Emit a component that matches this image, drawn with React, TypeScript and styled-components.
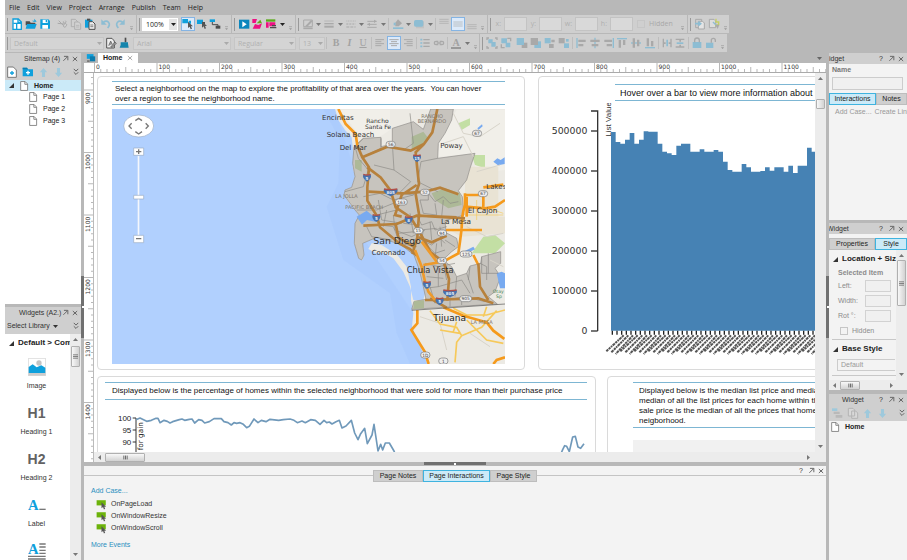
import React from "react";
import styled, { createGlobalStyle, css } from "styled-components";

const BLUE = "#0fa0dc";
const SOFT = "#8dbdd3";
const DARK = "#4c4c4c";
const DIM = "#a9a9a9";

const Global = createGlobalStyle`
  * { box-sizing: border-box; }
  html, body { margin: 0; height: 100%; }
  body {
    background: #fff;
    font: 7px/10px "Liberation Sans", Arial, sans-serif;
    color: #333;
    overflow: hidden;
  }
  button, input, select { font: inherit; color: inherit; margin: 0; padding: 0; border: 0; background: none; }
  svg { display: block; flex: none; }
  ul { list-style: none; margin: 0; padding: 0; }
  p, h2, h3 { margin: 0; font-size: inherit; }
`;

/* ---------- shell ---------- */
const Shell = styled.div`
  display: flex;
  flex-direction: column;
  height: 100vh;
  margin-left: 5px;
  background: #b8b8b8;
  overflow: hidden;
`;
const MenuBar = styled.nav`
  display: flex;
  gap: 7px;
  height: 15px;
  padding: 0 4px;
  align-items: center;
  font-family: "Open Sans", "Noto Sans", sans-serif;
  button { white-space: nowrap; color: #222; }
`;
const ToolRow = styled.div`
  display: flex;
  gap: 1px;
  height: 18px;
  margin-bottom: 1px;
  flex: none;
`;
const ToolGroup = styled.div`
  display: flex;
  align-items: center;
  background: #cfcfcf;
  flex: none;
`;
const Handle = styled.i`
  width: 5px;
  height: 13px;
  flex: none;
  &::before { content: ""; display: block; width: 1px; height: 13px; margin-left: 2px; background: #999; }
`;
const Sep = styled.i<{ $w?: number }>`
  width: ${(p) => p.$w ?? 3}px;
  height: 12px;
  flex: none;
  &::before { content: ""; display: block; width: 1px; height: 12px; margin-left: 1px; background: #bdbdbd; }
`;
const Gap = styled.i<{ $w: number }>`
  width: ${(p) => p.$w}px;
  flex: none;
`;
const Tool = styled.button<{ $w?: number; $on?: boolean }>`
  width: ${(p) => p.$w ?? 14}px;
  height: 14px;
  display: grid;
  place-items: center;
  flex: none;
  ${(p) => p.$on && css`border: 1px solid #85b4e3; background: #dceafa;`}
`;
const Combo = styled.span<{ $w: number; $live?: boolean }>`
  display: flex;
  align-items: center;
  width: ${(p) => p.$w}px;
  height: 13px;
  flex: none;
  background: ${(p) => (p.$live ? "#fff" : "#d4d4d4")};
  border: 1px solid ${(p) => (p.$live ? "#fff" : "#c6c6c6")};
  color: ${(p) => (p.$live ? "#222" : "#b0b0b0")};
  font-family: "Open Sans", "Noto Sans", sans-serif;
  select { appearance: none; flex: 1; min-width: 0; padding-left: 3px; height: 11px; line-height: 11px; opacity: 1; }
  i { width: 8px; height: 11px; display: grid; place-items: center; background: ${(p) => (p.$live ? "#e4e4e4" : "none")}; }
`;
const Field = styled.label<{ $w: number }>`
  display: flex;
  align-items: center;
  justify-content: flex-end;
  gap: 3px;
  width: ${(p) => p.$w}px;
  flex: none;
  color: #b0b0b0;
  font-family: "Open Sans", "Noto Sans", sans-serif;
  input { width: 23px; height: 14px; background: #d9d9d9; border: 1px solid #c3c3c3; flex: none; }
`;
const Check = styled.label`
  display: flex;
  align-items: center;
  gap: 4px;
  color: #a8a8a8;
  input { appearance: none; width: 8px; height: 8px; border: 1px solid #c6c6c6; background: transparent; flex: none; }
`;
const ToolCheck = styled(Check)`
  width: 41px;
  margin-left: 4px;
  font-family: "Open Sans", "Noto Sans", sans-serif;
`;

const Main = styled.div`
  flex: 1;
  min-height: 0;
  display: grid;
  grid-template-columns: 76px minmax(0, 1fr) 78px;
  column-gap: 3px;
`;
const Column = styled.div`
  display: flex;
  flex-direction: column;
  min-width: 0;
  min-height: 0;
  position: relative;
`;
const SplitGrip = styled.i<{ $side: "left" | "right" }>`
  position: absolute;
  top: 44%;
  ${(p) => (p.$side === "left" ? "right: -3px;" : "left: -3px;")}
  width: 3px;
  height: 62px;
  background: #707070;
  display: grid;
  place-items: center;
  &::before { content: ""; width: 2px; height: 2px; background: #fff; }
`;
const Panel = styled.section<{ $h?: number; $bg?: string }>`
  display: flex;
  flex-direction: column;
  min-height: 0;
  overflow: hidden;
  background: ${(p) => p.$bg ?? "#f3f3f3"};
  ${(p) => (p.$h ? css`flex: 0 0 ${p.$h}px;` : css`flex: 1;`)}
`;
const PanelTitle = styled.header<{ $pad?: number }>`
  display: flex;
  align-items: center;
  height: 11px;
  flex: none;
  background: #cfcfcf;
  padding: 0 1px 0 ${(p) => p.$pad ?? 0}px;
  white-space: nowrap;
  h2 { flex: 1; min-width: 0; font-weight: 400; color: #333; }
  button { width: 10px; height: 10px; display: grid; place-items: center; }
`;
const PanelTools = styled.div`
  display: flex;
  align-items: center;
  height: 16px;
  flex: none;
  background: #cfcfcf;
`;
const Push = styled.i`flex: 1;`;

/* ---------- sitemap ---------- */
const Row = styled.li<{ $on?: boolean; $indent: number; $bold?: boolean }>`
  height: ${(p) => (p.$on ? 11 : 12)}px;
  display: flex;
  align-items: center;
  gap: 5px;
  padding-left: ${(p) => p.$indent}px;
  background: ${(p) => (p.$on ? "#cbeaf8" : "transparent")};
  font-weight: ${(p) => (p.$bold ? 700 : 400)};
  color: #222;
`;

/* ---------- widgets ---------- */
const LibraryBar = styled.div`
  display: flex;
  align-items: center;
  height: 16px;
  flex: none;
  padding-left: 2px;
  background: #cfcfcf;
  button { display: flex; align-items: center; gap: 3px; }
  button:last-child { display: grid; }
`;
const Scroller = styled.div`
  flex: 1;
  min-height: 0;
  display: flex;
  overflow: hidden;
`;
const Clip = styled.div`
  flex: 1;
  min-width: 0;
  overflow: hidden;
`;
const Heading = styled.h3`
  display: flex;
  align-items: center;
  gap: 4px;
  height: 18px;
  padding-left: 4px;
  font-size: 8px;
  white-space: nowrap;
  color: #222;
`;
const WidgetItem = styled.li`
  height: 46px;
  padding-right: 2px;
  display: flex;
  flex-direction: column;
  align-items: center;
  white-space: nowrap;
`;
const Glyph = styled.div`
  height: 29px;
  display: grid;
  place-items: center;
  font: 700 14px/14px "Liberation Sans", Arial, sans-serif;
  color: #626262;
`;

/* ---------- scroll bars ---------- */
const BarV = styled.div`
  width: 11px;
  flex: none;
  display: flex;
  flex-direction: column;
  align-items: center;
  background: #ececec;
  padding: 3px 0;
`;
const BarH = styled.div`
  height: 10px;
  flex: none;
  display: flex;
  align-items: center;
  background: #ececec;
  padding: 0 3px;
`;
const Thumb = styled.i<{ $w: number; $h: number; $before: number }>`
  width: ${(p) => p.$w}px;
  height: ${(p) => p.$h}px;
  margin: ${(p) => (p.$w === 9 ? `${p.$before}px 0 0` : `0 0 0 ${p.$before}px`)};
  border: 1px solid #b0b0b0;
  border-radius: 1px;
  background: linear-gradient(${(p) => (p.$w === 9 ? "90deg" : "180deg")}, #f8f8f8, #d2d2d2);
  display: grid;
  place-items: center;
  flex: none;
`;

/* ---------- canvas ---------- */
const TabStrip = styled.div`
  display: flex;
  align-items: center;
  height: 10px;
  flex: none;
  padding-right: 4px;
`;
const DocTab = styled.button`
  display: flex;
  align-items: center;
  gap: 5px;
  height: 10px;
  padding: 0 5px;
  background: #fff;
  font-weight: 700;
  color: #222;
`;
const RulerRow = styled.div`
  display: flex;
  height: 10px;
  flex: none;
  background: #fff;
  padding-left: 10px;
  overflow: hidden;
  border-bottom: 1px solid #aaa;
`;
const Work = styled.div`
  flex: 1;
  min-height: 0;
  display: flex;
  overflow: hidden;
  background: #fff;
`;
const RulerSide = styled.div`
  width: 10px;
  flex: none;
  overflow: hidden;
  border-right: 1px solid #bbb;
`;
const Stage = styled.div`
  flex: 1;
  min-width: 0;
  display: flex;
  flex-direction: column;
  overflow: hidden;
`;
const Paper = styled.div`
  flex: 1;
  min-height: 0;
  overflow: hidden;
  padding: 3px;
  display: flex;
  flex-direction: column;
  gap: 6px;
`;
const CardRow = styled.div<{ $gap: number }>`
  display: flex;
  align-items: stretch;
  gap: ${(p) => p.$gap}px;
  flex: none;
`;
const Card = styled.article<{ $pad: string }>`
  flex: none;
  border: 1px solid #dadada;
  border-radius: 4px;
  padding: ${(p) => p.$pad};
`;
const Note = styled.div<{ $pad: string; $size?: number }>`
  border-top: 1px solid #7db6d3;
  border-bottom: 1px solid #7db6d3;
  padding: ${(p) => p.$pad};
  font-size: ${(p) => p.$size ?? 8}px;
  line-height: 10px;
  color: #111;
  white-space: pre;
`;
const MapFrame = styled.div`
  padding: 4px 0 1px;
`;
const ChartNote = styled.div`
  margin: 0 0 2px 76px;
`;
const ChartSpace = styled.div`
  padding-top: 13px;
`;
const Placeholder = styled.div`
  height: 60px;
  margin-top: 12px;
  background: #f1f1f1;
`;

/* ---------- bottom panel ---------- */
const Grip = styled.div`
  height: 4px;
  flex: none;
  display: flex;
  justify-content: center;
  i { width: 62px; height: 3px; background: #707070; display: grid; place-items: center; }
  i::before { content: ""; width: 2px; height: 2px; background: #fff; }
`;
const Bottom = styled.section`
  height: 94px;
  flex: none;
  background: #f3f3f3;
`;
const BottomHead = styled.div`
  display: grid;
  grid-template-columns: 1fr auto 1fr;
  height: 20px;
  background: linear-gradient(#c4c4c4, #c4c4c4) 0 9px / 100% 1px no-repeat;
  align-items: center;
`;
const Tabs = styled.div`
  display: flex;
  flex: none;
  grid-column: 2;
`;
const Tab = styled.button<{ $on?: boolean; $w: number }>`
  width: ${(p) => p.$w}px;
  height: 12px;
  flex: none;
  border: 1px solid ${(p) => (p.$on ? "#3fb3df" : "#bdbdbd")};
  background: ${(p) => (p.$on ? "#cbeaf8" : "#cfcfcf")};
  white-space: nowrap;
  color: #222;
`;
const HeadButtons = styled.div`
  display: flex;
  justify-content: flex-end;
  align-self: start;
  button { width: 10px; height: 9px; display: grid; place-items: center; }
`;
const Events = styled.div`
  padding: 0 7px;
  a { color: #2a8fc0; text-decoration: none; display: block; height: 10px; }
  ul { padding: 2px 0 6px 5px; }
  li { height: 12px; }
  li button { display: flex; align-items: center; gap: 4px; height: 12px; white-space: nowrap; }
`;

/* ---------- right column ---------- */
const NameBox = styled.label`
  display: flex;
  flex-direction: column;
  gap: 2px;
  padding: 1px 4px 3px 3px;
  font-weight: 700;
  color: #777;
  input { height: 13px; width: 100%; border: 1px solid #ccc; background: #f0f0f0; }
`;
const Links = styled.div`
  display: flex;
  gap: 3px;
  padding: 2px 0 0 6px;
  white-space: nowrap;
  a { color: #999; text-decoration: none; }
`;
const PropRow = styled.label`
  display: flex;
  align-items: center;
  height: 15px;
  padding-left: 9px;
  color: #8b8b8b;
  span { width: 27px; }
  input { width: 26px; height: 12px; border: 1px solid #d2d2d2; background: #f0f0f0; }
`;
const PropTitle = styled.p`
  padding-left: 9px;
  font-weight: 700;
  color: #8b8b8b;
`;
const PropCheck = styled(Check)`
  height: 15px;
  padding-left: 11px;
  color: #8b8b8b;
`;
const StyleSelect = styled.select`
  appearance: none;
  display: block;
  width: 58px;
  height: 12px;
  margin: 1px 0 4px 8px;
  padding-left: 3px;
  border: 1px solid #ccc;
  border-right: 0;
  color: #999;
`;
const Rule = styled.hr`
  border: 0;
  border-top: 1px solid #c8c8c8;
  margin: 1px 0 0 3px;
`;
const Divider = styled.i<{ $h: number }>`
  height: ${(p) => p.$h}px;
  flex: none;
`;
const ClippedTitle = styled.h2`
  text-indent: -2px;
`;

/* ---------- icons, drawn on a 36-unit grid ---------- */
const Icon = ({ s = 12, children }: { s?: number; children: React.ReactNode }) => (
  <svg width={s} height={s} viewBox="0 0 36 36" fill="none" aria-hidden="true">{children}</svg>
);
const Caret = ({ c = "#333", dir = "down" }: { c?: string; dir?: "down" | "up" | "left" | "right" }) => {
  const d = { down: "M0 1h5l-2.5 3z", up: "M0 4h5l-2.5-3z", left: "M4 0v5l-3-2.5z", right: "M1 0v5l3-2.5z" }[dir];
  return <svg width="5" height="5" viewBox="0 0 5 5" aria-hidden="true"><path d={d} fill={c} /></svg>;
};
const Tri = () => <svg width="5" height="5" viewBox="0 0 5 5" aria-hidden="true"><path d="M5 0v5H0z" fill="#333" /></svg>;
const PinIcon = () => <Icon s={7}><path d="M10 7h20v20M29 8 7 30" stroke="#666" strokeWidth="5" /></Icon>;
const CloseIcon = ({ c = "#666" }: { c?: string }) => <Icon s={6}><path d="M5 6l26 24M31 6L5 30" stroke={c} strokeWidth="6" /></Icon>;
const Chevrons = () => <Icon s={8}><path d="M8 4l10 10L28 4M8 19l10 10 10-10" stroke="#555" strokeWidth="4" /></Icon>;
const PageIcon = () => <Icon s={10}><path d="M6 2h16l9 9v23H6z" fill="#fff" stroke="#777" strokeWidth="3" /><path d="M21 2v10h10" stroke="#777" strokeWidth="3" /></Icon>;
const Cursor = ({ x = 18, y = 12, c = "#555" }: { x?: number; y?: number; c?: string }) => (
  <path transform={`translate(${x} ${y})`} d="M0 0v19l5-4 3 8 4-2-3-7h6z" fill={c} />
);
const Arrow = ({ up }: { up?: boolean }) => (
  <Icon s={11}><path d={up ? "M18 3l12 14h-7v16H13V17H6z" : "M18 33L6 19h7V3h10v16h7z"} fill="#9ec9dc" /></Icon>
);
const More = ({ w = 9 }: { w?: number }) => (
  <Tool $w={w} aria-label="More tools">
    <svg width="5" height="14" viewBox="0 0 15 42"><path d="M3 29h9" stroke="#999" strokeWidth="2" /><path d="M3 34h9l-4 5z" fill="#999" /></svg>
  </Tool>
);
const Lines = ({ ys, x1 = 4, x2 = 32, c = DIM, w = 3, dash }: { ys: number[]; x1?: number; x2?: number; c?: string; w?: number; dash?: string }) => (
  <path d={ys.map((y) => `M${x1} ${y}H${x2}`).join("")} stroke={c} strokeWidth={w} strokeDasharray={dash} />
);

const icons: Record<string, React.ReactNode> = {
  new: <><path d="M6 3h16l9 9v22H6z" fill="#fff" stroke={BLUE} strokeWidth="4" /><path d="M21 3v10h10M7 16h24M17 16v17" stroke={BLUE} strokeWidth="4" /></>,
  open: <><path d="M2 10h12l3 4h14v8H2z" fill={DARK} /><path d="M20 8h8V2l7 9h-9" fill={BLUE} /><path d="M6 18h29l-5 14H2z" fill={BLUE} /></>,
  save: <><path d="M4 4h24l5 5v23H4z" fill={BLUE} /><path d="M11 5h15v10H11zM10 21h17v11H10z" fill="#fff" /><path d="M20 6h4v7h-4z" fill={BLUE} /></>,
  cut: <path d="M8 8l14 14M5 16l20 2M24 20a4 4 0 1 0 6 4 4 4 0 1 0-6-4M22 10a4 4 0 1 0 6-2" stroke={DIM} strokeWidth="3" />,
  copy: <><path d="M4 4h12l6 6v16H4z" stroke={DIM} strokeWidth="2.500" /><path d="M14 12h12l6 6v16H14z" fill="#d2d2d2" stroke={DIM} strokeWidth="2.500" /><path d="M18 22h10M18 27h10" stroke={DIM} strokeWidth="2" /></>,
  paste: <><path d="M3 5h22v24H3z" fill={BLUE} /><path d="M9 2h10v6H9z" fill={DARK} /><path d="M15 11h11l7 7v16H15z" fill="#eee" stroke={DARK} strokeWidth="3" /><path d="M19 21h9M19 26h9" stroke={DARK} strokeWidth="2" /></>,
  undo: <><path d="M10 13c12-9 25 3 13 17" stroke={SOFT} strokeWidth="5" /><path d="M4 4v16h16z" fill={SOFT} /></>,
  redo: <><path d="M26 13C14 4 1 16 13 30" stroke={SOFT} strokeWidth="5" /><path d="M32 4v16H16z" fill={SOFT} /></>,
  selA: <><path d="M1 3h17v13H1zM20 8h7v9h-7z" fill={BLUE} /><Cursor y={11} x={18} /></>,
  selB: <><path d="M3 5h18v13H3z" fill={BLUE} /><path d="M21 12h6v7h-6z" fill={DARK} /><Cursor y={10} /></>,
  connect: <><path d="M2 4h16v8H2z" fill={BLUE} /><path d="M20 23h14v9H20z" fill={DARK} /><path d="M10 12v8h17v4" stroke={DARK} strokeWidth="3" /></>,
  play: <><path d="M3 5h31v27H3z" fill="#0b86bd" /><path d="M13 10l13 9-13 9z" fill="#fff" /></>,
  share: <><path d="M4 3h14l-4 12H4z" fill="#ee1182" /><path d="M5 32l7-14 10 3 11-5-6 16z" fill="#ee1182" /><path d="M17 16L28 5l5 11z" fill="#63a81e" /></>,
  html: <><path d="M3 4h28v7H3z" fill="#5bab1b" /><path d="M3 13h8v16H3zM13 13h18v12H13z" fill="#ee1182" /><path d="M21 21h12v4H21zM15 27h19v4H15z" fill={DARK} /></>,
  pen: <><path d="M5 6h26v20H5z" stroke={DIM} strokeWidth="3" /><path d="M10 24L27 6l5 4-16 16z" fill={DIM} /><Lines ys={[31]} w={5} /></>,
  weight: <><Lines ys={[9]} w={2} /><Lines ys={[17]} w={4} /><Lines ys={[26]} w={6} /></>,
  dash: <><Lines ys={[9]} w={2} dash="3 2" /><Lines ys={[18]} w={3} dash="6 3" /><Lines ys={[27]} w={3} dash="9 3" /></>,
  ends: <><Lines ys={[10, 19, 28]} w={3} /><path d="M24 5l8 5-8 5zM12 14l-8 5 8 5z" fill={DIM} /></>,
  fill: <><path d="M10 14L18 4l12 12-10 9H10z" fill={DIM} /><path d="M3 28h31v5H3z" fill={SOFT} /><path d="M5 14h6v8H5z" fill={SOFT} /></>,
  shape: <><path d="M9 10h24v21H9z" fill="#c2c2c2" /><rect x="3" y="6" width="28" height="20" rx="5" fill={SOFT} /></>,
  vtop: <Lines ys={[4, 10, 16]} w={2} />,
  vmid: <Lines ys={[12, 18, 24]} w={2} />,
  vbot: <Lines ys={[20, 26, 32]} w={2} />,
  al: <><Lines ys={[8, 20]} x2={30} /><Lines ys={[14, 26]} x2={22} /></>,
  ac: <><Lines ys={[8, 20]} /><Lines ys={[14, 26]} x1={9} x2={27} /></>,
  ar: <><Lines ys={[8, 20]} x1={6} /><Lines ys={[14, 26]} x1={14} /></>,
  list: <><Lines ys={[8, 18, 28]} x1={13} w={4} /><Lines ys={[8, 18, 28]} x1={4} x2={10} w={5} c={SOFT} /></>,
  link: <path d="M16 13H9a5 5 0 0 0 0 10h7M20 13h7a5 5 0 0 1 0 10h-7M11 18h14" stroke={DIM} strokeWidth="4" />,
  styleEdit: <><path d="M5 4h16l7 8v21H5z" fill="#eee" stroke="#555" strokeWidth="3" /><path d="M11 26l6-14 5 10M17 30l13-15 4 4-12 12z" stroke="#555" strokeWidth="2" fill="#999" /></>,
  brush: <><path d="M20 2h5v14h-5z" fill={DARK} /><path d="M8 16h22v4l2 12H5l3-8z" fill="#1585ac" /></>,
  swap1: <><path d="M5 4h18v25H5z" stroke={DIM} strokeWidth="3" /><path d="M13 10h13l5 5v18H13z" fill="#e4e4e4" stroke={DIM} strokeWidth="3" /><path d="M3 17h15m-5-6l7 6-7 6" stroke={SOFT} strokeWidth="5" /></>,
  swap2: <><path d="M4 4h14l5 5v20H4z" fill="#ddd" stroke={DIM} strokeWidth="3" /><path d="M15 12l14 14" stroke={SOFT} strokeWidth="4" /><path d="M24 2v10h8v8l-10 3" stroke="#c6cf63" strokeWidth="4" /><path d="M22 20h12l-5 13z" fill={DIM} /></>,
  group: <><path d="M7 7h13v12H7zM16 15h13v14H16z" fill={SOFT} /><path d="M3 9V3h6M27 3h6v6M33 27v6h-6M9 33H3v-6" stroke={DIM} strokeWidth="4" /></>,
  ungroup: <><path d="M4 4h17v15H4zM17 17h14v14H17z" fill={SOFT} /><path d="M22 4h10v9M4 22v10h10" stroke={DIM} strokeWidth="4" /></>,
  front: <><path d="M17 17h17v16H17z" fill={DIM} /><path d="M2 3h22v21H2z" fill={SOFT} /></>,
  back: <><path d="M13 13h20v20H13z" fill={SOFT} /><path d="M2 3h22v21H2z" fill={DIM} /></>,
  fwd: <><path d="M2 3h18v16H2z" fill={SOFT} /><path d="M22 8h10v8H22zM15 21h14v12H15z" fill={DIM} /></>,
  bwd: <><path d="M2 3h18v16H2z" fill={DIM} /><path d="M18 19h15v14H18z" fill={SOFT} /><path d="M24 6h8v8h-8z" fill={SOFT} /></>,
  left: <><path d="M4 3h4v30H4z" fill={SOFT} /><path d="M10 8h22v7H10zM10 21h15v7H10z" fill={DIM} /></>,
  center: <><path d="M16 2h4v32h-4z" fill={SOFT} /><path d="M4 8h28v7H4zM8 21h20v7H8z" fill={DIM} /></>,
  right: <><path d="M29 3h4v30h-4z" fill={SOFT} /><path d="M4 8h23v7H4zM11 21h16v7H11z" fill={DIM} /></>,
  top: <><path d="M3 3h30v4H3z" fill={SOFT} /><path d="M8 9h7v23H8zM21 9h7v15h-7z" fill={DIM} /></>,
  middle: <><path d="M3 16h30v4H3z" fill={SOFT} /><path d="M8 4h7v28H8zM21 8h7v20h-7z" fill={DIM} /></>,
  bottom: <><path d="M3 30h30v4H3z" fill={SOFT} /><path d="M8 4h7v24H8zM21 12h7v16h-7z" fill={DIM} /></>,
  disth: <><path d="M16 8h5v20h-5z" fill={SOFT} /><path d="M5 5h4v26H5zM28 5h4v26h-4zM5 16h9v5H5zM23 16h9v5h-9z" fill={DIM} /></>,
  distv: <><path d="M8 16h20v5H8z" fill={SOFT} /><path d="M5 5h26v4H5zM5 28h26v4H5zM16 5h5v9h-5zM16 23h5v9h-5z" fill={DIM} /></>,
  lock: <><path d="M5 15h26v18H5z" fill={SOFT} /><path d="M11 16v-6a7 7 0 0 1 14 0v6" stroke={DIM} strokeWidth="4" /></>,
  unlock: <><path d="M3 17h22v16H3z" fill={SOFT} /><path d="M19 17v-7a6 6 0 0 1 12 0v5" stroke={DIM} strokeWidth="4" /></>,
  addPage: <><path d="M5 3h17l9 9v22H5z" fill="#fff" stroke="#777" strokeWidth="3" /><path d="M18 15v12M12 21h12" stroke={BLUE} strokeWidth="4" /></>,
  addFolder: <><path d="M2 5h13l3 5h15v21H2z" fill={BLUE} /><path d="M2 5h13l3 5H2z" fill="#0b7cae" /><path d="M18 14v12M12 20h12" stroke="#fff" strokeWidth="4" /></>,
  layers: <><path d="M3 4h16v8H3z" fill="#9ec9dc" /><path d="M8 14h18v7H8zM14 24h20v8H14z" fill="#b9b9b9" /></>,
  pages: <><path d="M4 4h14l5 5v18H4zM14 12h12l6 6v16H14z" fill="#d8d8d8" stroke="#b4b4b4" strokeWidth="3" /></>,
  event: <><path d="M2 4h30v17H2z" fill="#6db30b" /><Cursor x={18} y={11} /></>,
  device: <><path d="M3 4h24v17H3z" fill={BLUE} /><path d="M14 12h19v18H14z" fill="#0b7cae" /><path d="M4 27h9v4H4z" fill={DARK} /></>,
};

const T = ({ n, w, on, label }: { n: string; w?: number; on?: boolean; label?: string }) => (
  <Tool $w={w} $on={on} aria-label={label ?? n}><Icon s={12}>{icons[n]}</Icon></Tool>
);
const Drop = ({ w = 8, c = "#777" }: { w?: number; c?: string }) => (
  <Tool $w={w} aria-label="Options"><Caret c={c} /></Tool>
);
const TextTool = styled(Tool)<{ $face?: string }>`
  font: 700 10px/12px "Liberation Serif", serif;
  color: #a2a2a2;
  ${(p) => p.$face === "i" && css`font-style: italic;`}
  ${(p) => p.$face === "u" && css`text-decoration: underline; font-weight: 400;`}
  ${(p) => p.$face === "a" && css`border-bottom: 2px solid #999; height: 12px; width: 10px; margin: 0 2px;`}
`;
const Pick = ({ w, v, live, label }: { w: number; v: string; live?: boolean; label: string }) => (
  <Combo $w={w} $live={live}>
    <select aria-label={label} defaultValue={v}><option>{v}</option></select>
    <i><Caret c={live ? "#222" : "#aaa"} /></i>
  </Combo>
);
const WindowButtons = ({ help }: { help?: boolean }) => (
  <>
    {help && <button aria-label="Help">?</button>}
    <button aria-label="Float panel"><PinIcon /></button>
    <button aria-label="Close panel"><CloseIcon /></button>
  </>
);

/* ---------- rulers ---------- */
const STEP = 62.5;
const TopRuler = () => (
  <svg width="100%" height="9" aria-hidden="true">
    {Array.from({ length: 300 }, (_, i) => (
      <path key={i} d={`M${(i * STEP) / 10 + 0.5} 9v${i % 10 === 0 ? -9 : i % 5 === 0 ? -5 : -3}`} stroke="#999" strokeWidth=".7" />
    ))}
    {Array.from({ length: 12 }, (_, i) => (
      <text key={i} x={i * STEP + 2} y="6" fontSize="6" fill="#333" fontFamily="DejaVu Sans">{i * 100}</text>
    ))}
  </svg>
);
const SideRuler = () => (
  <svg width="9" height="800" aria-hidden="true">
    {Array.from({ length: 120 }, (_, i) => (
      <path key={i} d={`M9 ${17 - STEP + (i * STEP) / 10}h${i % 10 === 0 ? -9 : i % 5 === 0 ? -5 : -2}`} stroke="#999" strokeWidth=".7" />
    ))}
    {Array.from({ length: 6 }, (_, i) => (
      <text key={i} transform={`translate(6 ${17 + i * STEP + (i ? 17 : 14)}) rotate(-90)`} fontSize="6" fill="#333" fontFamily="DejaVu Sans">{900 + i * 100}</text>
    ))}
  </svg>
);

/* ---------- map ---------- */
const regionLines = [
  "M160 115l-25 25 10 35 30 35-15 50-55 15M213 115v30l-55 25M247 130l5 80-60-15M252 210l50 35-40 40M300 40l10 90-30 20",
  "M383 175l-50 10-10 60 60 30M330 245l-20 40-80-10M160 290l50-10 40 20 60-15M140 330l60 0 50-20M205 300l10 60 60 10",
  "M330 300l25 0 0-20 20 25 25-15 20 20 25-5M330 300l10 40 40 5-5-35M400 300l-5 50 35 5M320 345l15 30 30-10 10 25 35-10",
  "M250 345l5 45 50 20 40-20M210 375l40 5 20 50 50 10M340 390l-5 30 30 15 25-20 15 15M360 365l5 55M390 380l5 60M335 420l40 40 30-10",
  "M300 340l10 60M280 370l50 5M170 380l15 30 60 10M230 330l-10 50M200 345l60-15M265 400l50-5M380 430l-5 45M405 420l30 20M330 390l50-5",
  "M345 490l40 10 0 60-40 5M385 500l50-10M385 560l70-20 25 40M440 530l-5 60M470 520l20 60M360 560l15 50M420 590l0 30M480 500l-5 40",
  "M515 470l0 50 50 0M535 460l0 60M345 600l60 0 60-10 60 15M510 490l20 10 0 40M400 490l10 50M350 530l50 5M455 600l0 15",
];
const Shield = ({ x, y, t }: { x: number; y: number; t: string }) => (
  <g transform={`translate(${x} ${y})`}>
    <path d={t.length > 2 ? "M-20-10Q0-6 20-10Q26 2 0 12Q-26 2-20-10z" : "M-11-10Q0-6 11-10Q16 2 0 12Q-16 2-11-10z"} fill="#4672ad" />
    <path d={t.length > 2 ? "M-20-10Q0-6 20-10" : "M-11-10Q0-6 11-10"} stroke="#b0504a" strokeWidth="4" fill="none" />
    <text y="6" fontSize="12" fontWeight="700" fill="#e8eef6" textAnchor="middle">{t}</text>
  </g>
);
const Route = ({ x, y, t }: { x: number; y: number; t: string }) => (
  <g transform={`translate(${x} ${y})`}>
    <rect x={t.length > 2 ? -18 : -14} y="-9" width={t.length > 2 ? 36 : 28} height="18" rx="9" fill="#eee" stroke="#777" strokeWidth="2" />
    <text y="5" fontSize="13" fill="#444" textAnchor="middle">{t}</text>
  </g>
);
const AreaMap = () => (
  <svg width="393" height="255" viewBox="-594 27 1179 765" fontFamily="DejaVu Sans" role="img" aria-label="Map of San Diego neighborhoods">
    <path d="M-594 27H585V792H-594z" fill="#b1d0fe" />
    <path d="M40 27L90 120 85 250 50 320 100 480 240 580 260 700 300 792H352L310 640 150 400 130 200 75 27z" fill="#a2c6fb" opacity=".35" />
    <path d="M75 27L85 60 105 90 125 112 128 140 132 170 128 200 135 230 125 262 105 270 102 285 115 305 135 330 148 345 135 370 133 430 146 475 158 480 162 460 158 430 200 412 270 432 315 465 335 510 350 560 340 600 310 600 300 560 280 515 250 475 225 460 195 458 175 447 185 430 215 435 262 465 290 500 303 560 303 600 310 640 306 680 320 715 340 760 352 792H585V27z" fill="#eceae4" />
    <path d="M440 30l145 0 0 180-90 10 0-60-110 10 0-50zM90 30l150 0 0 60-30 20-60 0z" fill="#f1efe9" />
    <path d="M485 165l40 0 0 40-30-10zM520 410l35-5 30 25-30 30-70 0zM445 70l35-15 0 20-25 15z" fill="#c3dfa4" />
    <path d="M345 350l100 0 140 0 0 50-130 10zM465 200l100 0 0 150-100 0z" fill="#e9e3d4" />
    <path d="M160 115L213 112V140L247 132V85L310 65 340 88 362 27H430L425 60 405 100 385 130 383 175 495 160 480 205 470 240 445 272 457 290 462 345 405 362 408 398 440 415 445 440 425 455 398 480 425 500 440 530 470 520 480 498 512 490 515 470 572 455V490L555 505 572 530 555 575 535 590 562 612 305 628 312 604 348 598 340 560 328 510 312 465 270 432 200 412 158 430 162 465 155 480 146 475 133 430 135 370 148 345 135 330 102 285 105 270 125 262 135 230 128 190 132 140z" fill="#c7c4be" stroke="#8f8d89" strokeWidth="2" />
    <path d="M305 110l35-15 15 20-20 25-30 10zM365 280l40-15 45 15 5 35-40 10-40-25zM135 180l20 0 0 35-20-10zM312 604l30-3 0 24-32 2z" fill="#adb997" />
    <path d="M140 350l30-18 18 15 20 0-12 18-25-5-15 14zM550 185l12-10 10 5 12-8 0 20-20 4zM560 520l15-5 10 5 0 45-15 0zM460 455l30-15 5 8-30 15zM502 85l14-12 2 6-12 10z" fill="#78aaf0" />
    {regionLines.map((d) => <path key={d} d={d} fill="none" stroke="#8b8985" strokeWidth="2" />)}
    <path d="M430 40l30 60 50 10 60-40M400 130l60-20 30 60M500 215l70-20M470 380l60 30 50-10M330 650l60 20 20 80M480 700l60 40M540 480l40 20" fill="none" stroke="#d8d4ca" strokeWidth="3" />
    <g fill="none" stroke="#f6c95a" strokeWidth="5">
      <path d="M360 632l30 40 50 10 15 25 60-25 45-50M455 707l-15 20-5 60M390 690l60 10M440 665l-10 30M430 625l40 20 60 0 55-15M520 650l10-30M470 660l60 60 50 10" />
      <path d="M470 345l110 0M500 300l0 60M520 320l60 20" strokeWidth="2" />
    </g>
    <g fill="none" stroke="#f59a1c" strokeWidth="8">
      <path d="M85 27l22 45 30 30 5 35" />
      <path d="M455 385q0-40 10-70v-35M455 385l-5 40-5 35-45 25M408 390l108 0M520 275v45M465 320l60 5 30-5 30-20M520 262l60-8M465 285l55 0M490 465l15 30" />
      <path d="M322 630l0 40-18 20 40 65 12 37M400 622l60 25 70 20 20 25 33 25M585 772l-25 8-10 12" />
      <path d="M470 350l0-60" />
    </g>
    <g fill="none" stroke="#b7813c" strokeWidth="8">
      <path d="M142 137l15 35 20 30-5 60 0 40 28 45 10 35 60 50 30 15 20 20" />
      <path d="M157 172l75-32 70 12 40-20 25-35 15-70M342 132l-25 25 5 50 5 45-10 30 10 60-5 70-15 50" />
      <path d="M172 202l40 30 30 40 15 50 45 30 30 50 30 55 40 30 15 50-5 65M175 275l100 5 70-5 45-12 55 20M160 377l100-5 60-25 120 5M325 347l140 8M257 372l8 40 50 30M325 412l40 15 45-20M275 350l-20-5 20-60 45-30" />
      <path d="M345 600l160-5 45 15M505 490l5 70 25 40M360 595l50 28" />
    </g>
    <path d="M315 450l20 50 10 45 10 30 20 25M335 425l45 60 25-2M340 495l60-10" fill="none" stroke="#ee9a2b" strokeWidth="8" />
    <path d="M305 631L585 612" stroke="#555" strokeWidth="2" />
    <Shield x={171} y={233} t="5" /><Shield x={242} y={277} t="805" /><Shield x={321} y={175} t="15" /><Shield x={199} y={354} t="5" />
    <Shield x={296} y={360} t="8" /><Shield x={351} y={555} t="5" /><Shield x={420} y={580} t="805" /><Shield x={389} y={604} t="5" />
    <Route x={242} y={133} t="56" /><Route x={501} y={100} t="67" /><Route x={345} y={277} t="52" /><Route x={519} y={281} t="67" />
    <Route x={274} y={306} t="163" /><Route x={325} y={392} t="15" /><Route x={396} y={399} t="94" /><Route x={468} y={462} t="125" />
    <Route x={396} y={482} t="54" /><Route x={467} y={596} t="905" /><Route x={346} y={765} t="1D" /><Route x={400} y={783} t="1" />
    <g fill="#333">
      <g fontSize="21">
        <text x="36" y="59">Encinitas</text><text x="50" y="112">Solana Beach</text><text x="89" y="149">Del Mar</text>
        <text x="391" y="145">Poway</text><text x="529" y="266">Lakes</text><text x="185" y="464">Coronado</text>
      </g>
      <g fontSize="18"><text x="169" y="69">Rancho</text><text x="165" y="86">Santa Fe</text></g>
      <g fontSize="22"><text x="473" y="339">El Cajon</text><text x="393" y="371">La Mesa</text></g>
      <text x="290" y="518" fontSize="25">Chula Vista</text>
      <text x="190" y="432" fontSize="28">San Diego</text>
      <text x="370" y="663" fontSize="27" fill="#222">Tijuana</text>
      <g fontSize="15" fill="#80766a">
        <text x="334" y="54">RANCHO</text><text x="323" y="68">BERNARDO</text><text x="76" y="293">LA JOLLA</text><text x="106" y="327">PACIFIC BEACH</text>
        <text x="482" y="673">LA MESA</text>
      </g>
      <g fontSize="14" fill="#4b8754"><text x="548" y="578">Otay</text><text x="558" y="593">Sp</text></g>
    </g>
    <g fill="#fff" stroke="#98aac2" strokeWidth="2">
      <ellipse cx="-514" cy="78" rx="45" ry="33" />
      <path d="M-517 168h5v240h-5z" stroke="none" fill="#f4f7fc" />
      <path d="M-529 144h30v22h-30zM-529 406h30v22h-30zM-529 286h30v11h-30z" />
    </g>
    <path d="M-524 62l10-7 10 7M-524 95l10 7 10-7M-535 70l-8 8 8 8M-493 70l8 8-8 8M-522 155h16M-514 148v14M-522 416h16" fill="none" stroke="#777" strokeWidth="4" />
  </svg>
);

/* ---------- bar chart ---------- */
const tops = [-24, 6, 11, -1, -21, 11, -1, -26, -25, -25, 11, 35, 40, 45, 17, 11, 11, 35, 35, 28, 35, 35, 30, 35, 65, 90, 95, 95, 72, 82, 95, 95, 93, 82, 92, 82, 82, 95, 77, 99, 77, 77, 23, 35, 20, 10, 25, 40, 30, 35];
const barOutline = `M246 572${tops.map((t, i) => `V${t}H${260 + i * 14}`).join("")}V572z`;
const BarChart = () => (
  <svg width="300" height="257" viewBox="30 -111 900 771" fontFamily="DejaVu Sans" role="img" aria-label="List value by neighborhood">
    <text transform="translate(247 -10) rotate(-90)" fontSize="24" fill="#333" fontFamily="Liberation Sans">List Value</text>
    <path d={barOutline} fill="#4682b4" />
    {[500000, 400000, 300000, 200000, 100000, 0].map((v, i) => (
      <g key={v}>
        <text x="175" y={-17 + i * 120} fontSize="28" fill="#333" textAnchor="end">{v}</text>
        <path d={`M186 ${-27 + i * 120}h20`} stroke="#333" strokeWidth="4" />
      </g>
    ))}
    <path d="M186-87h20V573" fill="none" stroke="#333" strokeWidth="4" />
    {tops.map((_, i) => (
      <g key={i}>
        <path d={`M${250 + i * 14} 572v12`} stroke="#222" strokeWidth="4" />
        <path d={`M${284 + i * 14} 586L${232 + i * 14} ${634 + (i % 3) * 4}`} stroke="#555" strokeWidth="6" strokeDasharray="7 2 9 2 5 2" />
      </g>
    ))}
  </svg>
);

/* ---------- line chart ---------- */
const trend = "M408 150l12-5 20 10 14-3 14-6 6 0 6 13 12-7 10 3 8 5 8-4 20-6 8-2 8 4 14-3 8-1 8 12 12-10 10 2 8 8 14-4 14-9 22 0 8 9 12 3 10 7 8-7 8 2 10-2 10 5 10 10 8-4 14-22 12 11 10-7 14 4 12-7 26 3 14-2 20-2 12 4 10 7 14-5 10 5 16-9 14 2 14 12 12-12 8 7 8-2 8 6 12-7 10-4 8 23 12-6 16-17 10 38 10 20 8-18 12-16 8 46 14-26 6-32 12 80 8-20 6 17 8-21 12 0 14 24 30 80M1650 330l38-90 6-12 6 2 8 16 10-44 8-2 8 32 8 4 10-14";
const LineChart = () => (
  <svg width="482" height="70" viewBox="315 130 1446 210" role="img" aria-label="Percentage of homes sold for gain">
    <path d="M398 145h10V340M398 181h10M398 217h10M398 253h10" fill="none" stroke="#333" strokeWidth="3" />
    {[100, 95, 90, 85].map((v, i) => (
      <text key={v} x="394" y={154 + i * 36} fontSize="24" fill="#222" textAnchor="end" fontFamily="Liberation Sans">{v}</text>
    ))}
    <text transform="translate(430 242) rotate(-90)" fontSize="22" fill="#222" fontFamily="DejaVu Sans">for gain</text>
    <path d={trend} fill="none" stroke="#7099ba" strokeWidth="5" strokeLinejoin="round" />
  </svg>
);

const VScroll = ({ thumb, before }: { thumb: number; before: number }) => (
  <BarV>
    <Caret c="#777" dir="up" />
    <Thumb $w={9} $h={thumb} $before={before}>
      {thumb > 12 && <Icon s={5}><Lines ys={[6, 18, 30]} c="#555" w={5} x1={0} x2={36} /></Icon>}
    </Thumb>
    <Push />
    <Caret c="#777" />
  </BarV>
);
const HScroll = ({ thumb, before, tail = 0 }: { thumb: number; before: number; tail?: number }) => (
  <BarH>
    <Caret c="#777" dir="left" />
    <Thumb $w={thumb} $h={9} $before={before}>
      <Icon s={5}><path d="M6 4v28M18 4v28M30 4v28" stroke="#555" strokeWidth="6" /></Icon>
    </Thumb>
    <Push />
    <Caret c="#777" dir="right" />
    <Gap $w={tail} />
  </BarH>
);

const menus = ["File", "Edit", "View", "Project", "Arrange", "Publish", "Team", "Help"];

export default function App() {
  return (
    <>
      <Global />
      <Shell>
        <MenuBar>{menus.map((m) => <button key={m}>{m}</button>)}</MenuBar>
        <ToolRow>
          <ToolGroup>
            <Handle /><T n="new" /><T n="open" /><T n="save" w={13} /><Gap $w={4} /><T n="cut" /><T n="copy" /><T n="paste" w={13} />
            <Gap $w={3} /><T n="undo" /><T n="redo" /><More />
          </ToolGroup>
          <ToolGroup>
            <Handle /><Pick w={36} v="100%" live label="Zoom" /><Gap $w={3} /><T n="selA" on /><T n="selB" w={13} /><T n="connect" /><More />
          </ToolGroup>
          <ToolGroup>
            <Handle /><T n="play" w={13} /><T n="share" /><T n="html" /><Drop c="#222" /><More />
          </ToolGroup>
          <ToolGroup>
            <Handle /><T n="pen" /><Drop w={7} /><T n="weight" /><Drop /><T n="dash" /><Drop w={7} /><T n="ends" /><Drop /><Sep $w={4} />
            <T n="fill" w={13} /><Drop /><T n="shape" /><Drop /><Sep /><T n="vtop" /><T n="vmid" on /><T n="vbot" w={13} /><More />
          </ToolGroup>
          <ToolGroup>
            <Handle />
            <Field $w={34}>x:<input disabled /></Field><Field $w={35}>y:<input disabled /></Field>
            <Field $w={36}>w:<input disabled /></Field><Field $w={35}>h:<input disabled /></Field>
            <ToolCheck><input type="checkbox" disabled />Hidden</ToolCheck><More />
          </ToolGroup>
          <ToolGroup><Handle /><T n="swap1" /><T n="swap2" /><More w={8} /></ToolGroup>
        </ToolRow>
        <ToolRow>
          <ToolGroup>
            <Handle /><Pick w={94} v="Default" label="Style" /><T n="styleEdit" w={13} /><T n="brush" /><Gap $w={2} />
            <Pick w={98} v="Arial" label="Font" /><Gap $w={3} /><Pick w={62} v="Regular" label="Typeface" /><Gap $w={3} /><Pick w={26} v="13" label="Size" /><Sep $w={4} />
            <TextTool>B</TextTool><TextTool $w={13} $face="i">I</TextTool><TextTool $face="u">U</TextTool><Sep />
            <T n="al" /><T n="ac" on /><T n="ar" /><Sep /><T n="list" /><T n="link" /><Sep /><TextTool $face="a">A</TextTool><Drop /><More w={8} />
          </ToolGroup>
          <ToolGroup>
            <Handle /><T n="group" /><T n="ungroup" w={13} /><Gap $w={3} /><T n="front" /><T n="back" /><T n="fwd" /><T n="bwd" /><Sep />
            <T n="left" /><T n="center" /><T n="right" w={13} /><T n="top" /><T n="middle" /><T n="bottom" /><Sep />
            <T n="disth" w={13} /><T n="distv" /><Sep /><T n="lock" /><T n="unlock" /><More />
          </ToolGroup>
        </ToolRow>

        <Main>
          <Column>
            <Panel $bg="#fff">
              <PanelTitle $pad={19}><h2>Sitemap (4)</h2><WindowButtons /></PanelTitle>
              <PanelTools>
                <T n="addPage" /><T n="addFolder" w={17} /><Tool aria-label="Move up"><Arrow up /></Tool><Tool $w={16} aria-label="Move down"><Arrow /></Tool>
                <Push /><Tool $w={10} aria-label="More"><Chevrons /></Tool>
              </PanelTools>
              <ul>
                <Row $on $bold $indent={4}><Tri /><PageIcon />Home</Row>
                {["Page 1", "Page 2", "Page 3"].map((p) => <Row key={p} $indent={23}><PageIcon />{p}</Row>)}
              </ul>
            </Panel>
            <Divider $h={3} />
            <Panel $h={253} $bg="#fff">
              <PanelTitle $pad={14}><h2>Widgets (A2.)</h2><WindowButtons /></PanelTitle>
              <LibraryBar><button>Select Library <Caret /></button><Push /><Tool $w={10} aria-label="More"><Chevrons /></Tool></LibraryBar>
              <Scroller>
                <Clip>
                  <Heading><Tri />Default &gt; Common</Heading>
                  <ul>
                    <WidgetItem>
                      <Glyph>
                        <svg width="18" height="18" viewBox="0 0 54 54"><path d="M1 1h52v52H1z" fill="#fff" stroke="#ccc" strokeWidth="2" /><circle cx="33" cy="15" r="8" fill="#c4c4c4" /><path d="M2 45V27l12-8 12 9 14-6 12 7v16z" fill={BLUE} /><path d="M1 45h52v8H1z" fill="#ccc" /></svg>
                      </Glyph>Image
                    </WidgetItem>
                    <WidgetItem><Glyph>H1</Glyph>Heading 1</WidgetItem>
                    <WidgetItem><Glyph>H2</Glyph>Heading 2</WidgetItem>
                    <WidgetItem>
                      <Glyph><svg width="18" height="14" viewBox="0 0 54 42"><text x="0" y="37" fontSize="44" fontWeight="700" fontFamily="Liberation Serif" fill={BLUE}>A</text><path d="M34 34h19" stroke="#777" strokeWidth="4" /></svg></Glyph>Label
                    </WidgetItem>
                    <WidgetItem>
                      <Glyph><svg width="18" height="18" viewBox="0 0 54 54"><text x="0" y="36" fontSize="44" fontWeight="700" fontFamily="Liberation Serif" fill={BLUE}>A</text><path d="M34 6h19M34 15h19M34 25h19M34 34h19M0 43h53M0 51h53" stroke="#777" strokeWidth="4" /></svg></Glyph>
                    </WidgetItem>
                  </ul>
                </Clip>
                <VScroll thumb={21} before={4} />
              </Scroller>
            </Panel>
            <SplitGrip $side="left" />
          </Column>

          <Column>
            <TabStrip>
              <Tool aria-label="Pages"><Icon s={10}>{icons.device}</Icon></Tool>
              <DocTab>Home <CloseIcon c="#aaa" /></DocTab><Push /><Caret c="#666" />
            </TabStrip>
            <RulerRow><TopRuler /></RulerRow>
            <Work>
              <RulerSide><SideRuler /></RulerSide>
              <Stage>
                <Scroller>
                  <Paper>
                    <CardRow $gap={13}>
                      <Card $pad="4px 19px 4px 14px">
                        <Note $pad="2px 3px 0">{"Select a neighborhood on the map to explore the profitability of that area over the years.  You can hover\nover a region to see the neighborhood name."}</Note>
                        <MapFrame><AreaMap /></MapFrame>
                      </Card>
                      <Card $pad="7px 0 0 0">
                        <ChartNote><Note $size={9} $pad="3px 5px 2px">Hover over a bar to view more information about list</Note></ChartNote>
                        <BarChart />
                      </Card>
                    </CardRow>
                    <CardRow $gap={11}>
                      <Card $pad="5px 8px 0 7px">
                        <Note $pad="3px 7px">Displayed below is the percentage of homes within the selected neighborhood that were sold for more than their purchase price</Note>
                        <ChartSpace><LineChart /></ChartSpace>
                      </Card>
                      <Card $pad="5px 25px 0 25px">
                        <Note $pad="3px 60px 1px 6px">{"Displayed below is the median list price and median\nmedian of all the list prices for each home within the\nsale price is the median of all the prices that homes\nneigborhood."}</Note>
                        <Placeholder />
                      </Card>
                    </CardRow>
                  </Paper>
                  <VScroll thumb={10} before={18} />
                </Scroller>
                <HScroll thumb={40} before={3} tail={12} />
              </Stage>
            </Work>
            <Grip><i /></Grip>
            <Bottom>
              <BottomHead>
                <Tabs><Tab $w={50}>Page Notes</Tab><Tab $on $w={67}>Page Interactions</Tab><Tab $w={47}>Page Style</Tab></Tabs>
                <HeadButtons><WindowButtons help /></HeadButtons>
              </BottomHead>
              <Events>
                <a href="#add">Add Case...</a>
                <ul>
                  {["OnPageLoad", "OnWindowResize", "OnWindowScroll"].map((e) => (
                    <li key={e}><button><Icon s={11}>{icons.event}</Icon>{e}</button></li>
                  ))}
                </ul>
                <a href="#more">More Events</a>
              </Events>
            </Bottom>
          </Column>

          <Column>
            <Panel $h={167}>
              <PanelTitle><h2>idget</h2><WindowButtons help /></PanelTitle>
              <NameBox>Name<input /></NameBox>
              <Tabs><Tab $on $w={47}>Interactions</Tab><Tab $w={31}>Notes</Tab></Tabs>
              <Links><a href="#case">Add Case...</a><a href="#link">Create Link</a></Links>
            </Panel>
            <Divider $h={3} />
            <Panel $h={167}>
              <PanelTitle><ClippedTitle>Widget</ClippedTitle><WindowButtons help /></PanelTitle>
              <Divider $h={4} />
              <Tabs><Tab $w={46}>Properties</Tab><Tab $on $w={32}>Style</Tab></Tabs>
              <Scroller>
                <Clip>
                  <Heading><Tri />Location + Size</Heading>
                  <PropTitle>Selected Item</PropTitle>
                  <PropRow><span>Left:</span><input /></PropRow>
                  <PropRow><span>Width:</span><input /></PropRow>
                  <PropRow><span>Rot °:</span><input /></PropRow>
                  <PropCheck><input type="checkbox" />Hidden</PropCheck>
                  <Rule />
                  <Heading><Tri />Base Style</Heading>
                  <StyleSelect aria-label="Base style" defaultValue="Default"><option>Default</option></StyleSelect>
                  <Rule />
                </Clip>
                <VScroll thumb={46} before={2} />
              </Scroller>
              <HScroll thumb={20} before={3} tail={10} />
            </Panel>
            <Divider $h={4} />
            <Panel>
              <PanelTitle $pad={13}><h2>Widget</h2><WindowButtons help /></PanelTitle>
              <PanelTools>
                <T n="layers" w={16} /><T n="pages" w={15} /><Tool $w={15} aria-label="Move up"><Arrow up /></Tool><Tool $w={15} aria-label="Move down"><Arrow /></Tool>
                <Push /><Tool $w={10} aria-label="More"><Chevrons /></Tool>
              </PanelTools>
              <ul><Row $bold $indent={1}><PageIcon />Home</Row></ul>
            </Panel>
            <SplitGrip $side="right" />
          </Column>
        </Main>
      </Shell>
    </>
  );
}
